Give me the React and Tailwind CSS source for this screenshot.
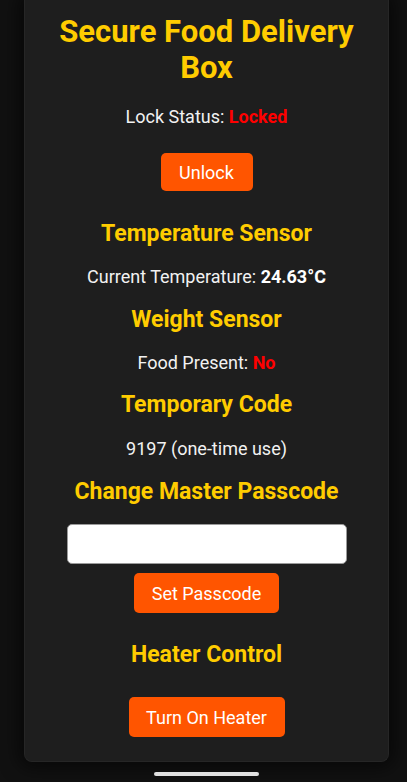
export default function App() {
  const font = { fontFamily: "Roboto, 'Noto Sans', sans-serif" };
  return (
    <div className="w-[407px] h-[782px] bg-[#111111] flex flex-col overflow-hidden" style={font}>
      <div className="ml-[24px] w-[365px] h-[762px] bg-[#1e1e1e] rounded-b-[8px] border-x border-b border-[#262626] shadow-[0_0_18px_6px_rgba(0,0,0,0.55)] flex flex-col items-center text-center">
        <h1 className="mt-[14px] text-[31px] leading-[36px] font-bold text-[#ffcc00] w-[320px]">
          Secure Food Delivery Box
        </h1>
        <p className="mt-[19px] text-[18px] leading-[24px] text-[#f2f2f2]">
          Lock Status: <span className="font-bold text-[#ff0000]">Locked</span>
        </p>
        <button className="mt-[24px] w-[92px] h-[38px] rounded-[5px] bg-[#ff5500] text-white text-[18px]">
          Unlock
        </button>
        <h2 className="mt-[29px] text-[23px] leading-[28px] font-bold text-[#ffcc00]">Temperature Sensor</h2>
        <p className="mt-[17px] text-[18px] leading-[24px] text-[#f2f2f2]">
          Current Temperature: <span className="font-bold text-white">24.63°C</span>
        </p>
        <h2 className="mt-[17px] text-[23px] leading-[28px] font-bold text-[#ffcc00]">Weight Sensor</h2>
        <p className="mt-[17px] text-[18px] leading-[24px] text-[#f2f2f2]">
          Food Present: <span className="font-bold text-[#ff0000]">No</span>
        </p>
        <h2 className="mt-[16px] text-[23px] leading-[28px] font-bold text-[#ffcc00]">Temporary Code</h2>
        <p className="mt-[18px] text-[18px] leading-[24px] text-[#f2f2f2]">9197 (one-time use)</p>
        <h2 className="mt-[17px] text-[23px] leading-[28px] font-bold text-[#ffcc00]">Change Master Passcode</h2>
        <input
          type="password"
          className="mt-[18px] w-[280px] h-[40px] rounded-[5px] bg-white border border-[#9a9a9a] outline-none"
        />
        <button className="mt-[9px] w-[145px] h-[40px] rounded-[5px] bg-[#ff5500] text-white text-[18px]">
          Set Passcode
        </button>
        <h2 className="mt-[28px] text-[23px] leading-[28px] font-bold text-[#ffcc00]">Heater Control</h2>
        <button className="mt-[28px] w-[156px] h-[40px] rounded-[5px] bg-[#ff5500] text-white text-[18px]">
          Turn On Heater
        </button>
      </div>
      <div className="mt-[10px] ml-[154px] w-[105px] h-[4px] rounded-full bg-[#e0e0e0]" />
    </div>
  );
}
